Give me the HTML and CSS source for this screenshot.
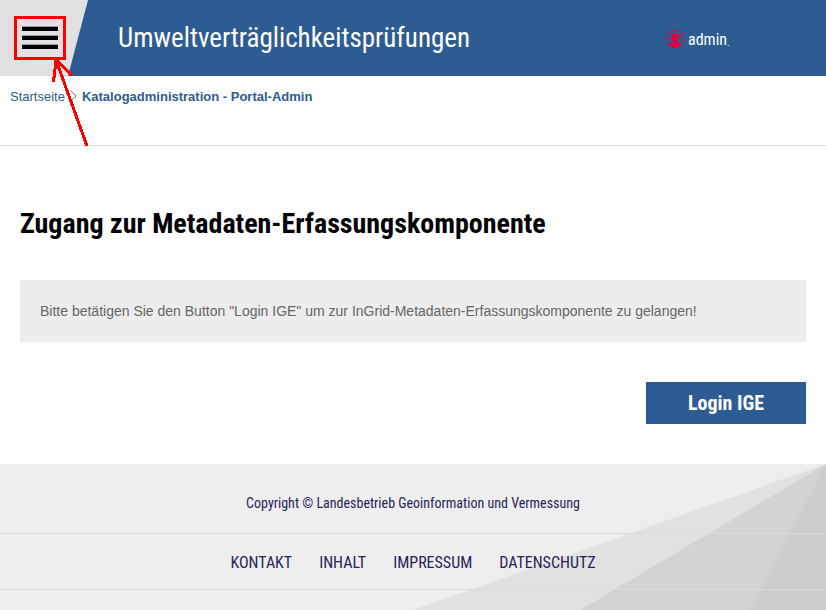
FILE: index.html
```
<!DOCTYPE html>
<html lang="de">
<head>
<meta charset="utf-8">
<title>Umweltverträglichkeitsprüfungen</title>
<link rel="stylesheet" href="styles.css">
</head>
<body>
<header class="header">
  <div class="menu">
    <svg class="menu-icon" width="36" height="24" viewBox="0 0 36 24"><path d="M0 2.500h36M0 11.500h36M0 20.500h36" stroke="#999" stroke-width="5"/><path d="M0 3h36M0 12h36M0 21h36" stroke="#000" stroke-width="4"/></svg>
  </div>
  <div class="site-title"><span class="cond">Umweltverträglichkeitsprüfungen</span></div>
  <div class="user">
    <svg width="18" height="18" viewBox="0 0 18 18"><circle cx="9" cy="9" r="8.400" fill="none" stroke="#e3003b" stroke-width="1"/><path d="M9 3c2.700 0 4.200 1.700 4 4.200.3.700 0 1.700-.6 2-.3 1-.7 1.500-1.200 2v1.300l4.300 1.700A8.300 8.300 0 0 1 9 17.300a8.300 8.300 0 0 1-6.500-3.100l4.300-1.700v-1.300c-.5-.5-.9-1-1.200-2-.6-.3-.9-1.300-.6-2C4.800 4.700 6.300 3 9 3z" fill="#e3003b"/></svg>
    <span class="cond">admin</span><span class="dot">.</span>
  </div>
</header>
<nav class="breadcrumb">
  <a>Startseite</a>
  <svg width="7" height="12" viewBox="0 0 7 12"><path d="M1 1l5 5-5 5" fill="none" stroke="#777"/></svg>
  <b>Katalogadministration - Portal-Admin</b>
</nav>
<main class="content">
  <h1><span class="cond">Zugang zur Metadaten-Erfassungskomponente</span></h1>
  <p class="notice">Bitte betätigen Sie den Button "Login IGE" um zur InGrid-Metadaten-Erfassungskomponente zu gelangen!</p>
  <button class="login"><span class="cond">Login IGE</span></button>
</main>
<footer class="footer">
  <svg class="rays" width="426" height="146" viewBox="0 0 426 146"><path d="M426 0L13 146h413z" fill="#e1e1e1"/><path d="M426 0L180 146h246z" fill="#d3d3d3"/><path d="M426 0L350 146h76z" fill="#cdcdcd"/></svg>
  <div class="copyright"><span class="cond">Copyright © Landesbetrieb Geoinformation und Vermessung</span></div>
  <nav class="links">
    <a class="cond">KONTAKT</a><a class="cond">INHALT</a><a class="cond">IMPRESSUM</a><a class="cond">DATENSCHUTZ</a>
  </nav>
</footer>
<svg class="marker" width="100" height="150" viewBox="0 0 100 150"><g fill="none" stroke="#f00" stroke-width="3" shape-rendering="crispEdges"><path d="M15.500 17.500h49v41h-49z"/><path d="M87 146L56 60M53.500 82L56 60l16 15"/></g></svg>
</body>
</html>
```
FILE: styles.css
```
* { box-sizing: border-box; }
body { margin: 0; height: 610px; overflow: hidden; position: relative; background: #fff; font-family: "Liberation Sans", Arial, sans-serif; }
.cond { font-family: "Roboto Condensed", Roboto, sans-serif; font-stretch: 75%; white-space: nowrap; }
.header { display: flex; height: 76px; background: #2d5c92; color: #fff; }
.menu { width: 88px; padding: 26px 0 0 22px; background: #e1e1e1; clip-path: polygon(0 0, 100% 0, 68px 100%, 0 100%); }
.menu-icon { display: block; }
.site-title { width: 578px; padding-left: 30px; font-size: 27px; line-height: 77px; }
.user { display: flex; align-items: center; padding-top: 2px; font-size: 16px; font-weight: 450; }
.user svg { margin-right: 4px; }
.dot { font-size: 9px; padding-top: 7px; }
.breadcrumb { display: flex; align-items: center; height: 70px; padding: 0 10px 29px; border-bottom: 1px solid #ddd; font-size: 13px; color: #2d5c92; }
.breadcrumb svg { margin: 0 5px; }
.content { height: 318px; padding: 57px 20px 0; display: flex; flex-direction: column; }
h1 { margin: 0; font-size: 28px; line-height: 42px; color: #000; }
.notice { margin: 35px 0 40px; height: 62px; padding: 0 20px; line-height: 62px; background: #ededed; color: #666; font-size: 14px; white-space: nowrap; }
.login { align-self: flex-end; width: 160px; height: 42px; padding: 0; border: 0; background: #2d5c92; color: #fff; font-size: 20px; font-weight: 700; }
.footer { position: relative; height: 146px; background: #eee; color: #28225c; }
.rays { position: absolute; right: 0; top: 0; }
.copyright, .links { position: relative; display: flex; justify-content: center; align-items: center; border-bottom: 1px solid #dbdbdb; }
.copyright { height: 70px; padding-top: 9px; font-size: 14px; }
.links { height: 56px; padding-top: 2px; gap: 27px; font-size: 16px; }
.marker { position: absolute; left: 0; top: 0; }
```
